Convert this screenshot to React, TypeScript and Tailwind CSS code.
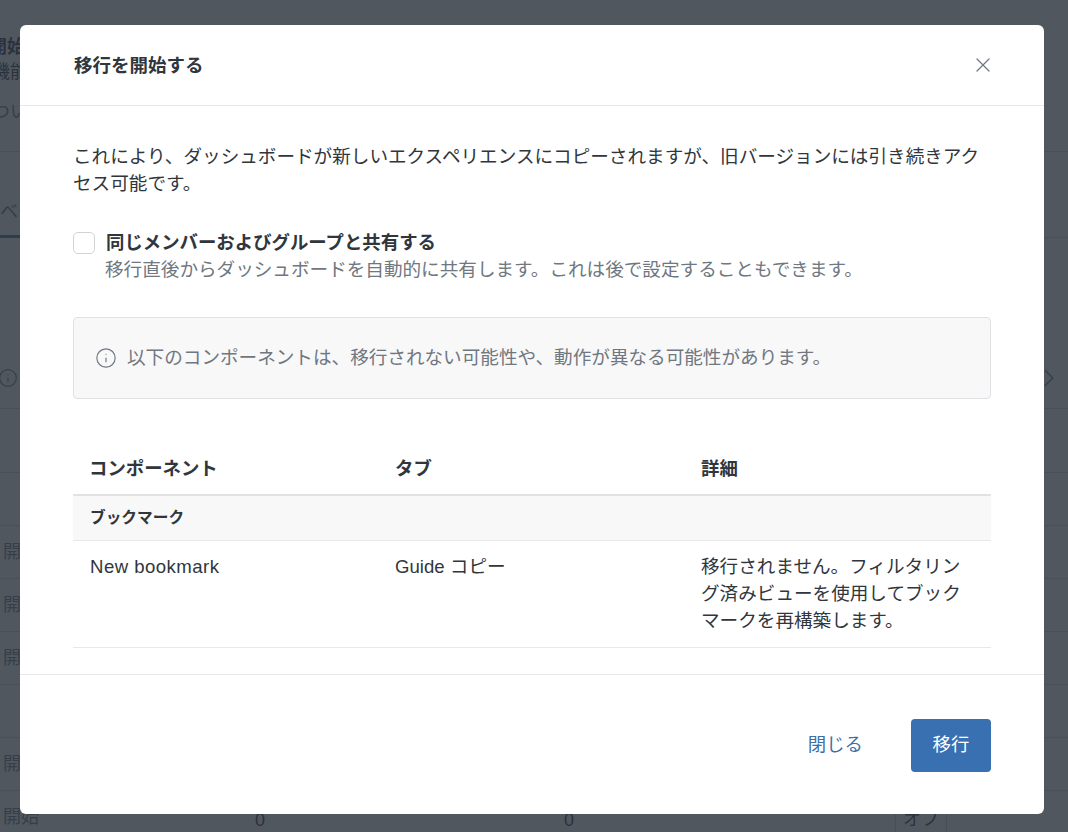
import { ChevronRight, Info, X } from "lucide-react";

const font = { fontFamily: '"Liberation Sans", "Noto Sans CJK JP", sans-serif' };

const bgRows = ["", "開始", "開始", "開始", "", "開始", "開始"];

const Backdrop = () => (
  <div className="h-[832px] overflow-hidden bg-white text-[#2e3338]">
    <div className="h-[152px] border-b border-[#d5d8dc] pt-[35px]">
      <p className="-ml-[11px] text-[18px] font-bold leading-[24px]">開始</p>
      <p className="-ml-[8px] mt-[1px] text-[18px] leading-[24px]">機能</p>
      <p className="-ml-[8px] mt-[16px] text-[18px] leading-[24px] text-[#6f7780]">ついて</p>
    </div>
    <div className="h-[86px] border-b border-[#d5d8dc] pt-[48px] text-[18px] leading-[24px] text-[#6f7780]">
      ベータ
    </div>
    <div className="-mt-[3px] h-[3px] w-[200px] bg-[#3a6eb0]" />
    <div className="flex h-[171px] items-center justify-between border-b border-[#d5d8dc] pt-[109px] pr-[4px] -ml-[2px]">
      <Info className="h-[20px] w-[20px] text-[#6f7780]" strokeWidth={1.5} />
      <ChevronRight className="h-[30px] w-[30px] text-[#6f7780]" strokeWidth={1.25} />
    </div>
    <div className="h-[64px] border-b border-[#d5d8dc]" />
    {bgRows.map((label, i) => (
      <div key={i} className="flex h-[53px] items-center border-b border-[#d5d8dc] pl-[3px] text-[18px] text-[#6f7780]">
        {label}
      </div>
    ))}
  </div>
);

const Footnotes = () => (
  <div className="absolute bottom-0 left-0 right-0 h-[30px] text-[18px] leading-[18px] text-[#2e3338]">
    <span className="absolute left-[255px] top-[9px]">0</span>
    <span className="absolute left-[564px] top-[9px]">0</span>
    <span className="absolute left-[895px] top-0 h-[40px] w-[52px] rounded border border-[#c9ccd1] pt-[7px] text-center">オフ</span>
  </div>
);

export default function App() {
  return (
    <div className="relative h-[832px] w-[1068px] overflow-hidden" style={font}>
      <Backdrop />
      <Footnotes />
      <div className="absolute inset-0 flex items-start bg-[#2b323c]/[0.82] pl-[20px] pt-[25px]">
        <div className="h-[789px] w-[1024px] rounded-[6px] bg-white text-[18px] text-[#30363c]">
          <div className="flex h-[81px] items-center justify-between border-b border-[#e6e8ea] pl-[54px] pr-[49px]">
            <h2 className="pt-[1px] text-[18.5px] font-bold">移行を開始する</h2>
            <X className="h-[24px] w-[24px] text-[#6f7780]" strokeWidth={1.25} />
          </div>

          <div className="px-[53px] pt-[37px]">
            <p className="text-[18.6px] leading-[27px]">
              これにより、ダッシュボードが新しいエクスペリエンスにコピーされますが、旧バージョンには引き続きアクセス可能です。
            </p>

            <div className="mt-[32px] flex gap-[11px]">
              <div className="mt-[3px] h-[22px] w-[22px] rounded-[5px] border border-[#cfd2d6] bg-white" />
              <div className="leading-[27px]">
                <p className="text-[18.4px] font-bold">同じメンバーおよびグループと共有する</p>
                <p className="-ml-[1px] text-[18.6px] text-[#6f7780]">移行直後からダッシュボードを自動的に共有します。これは後で設定することもできます。</p>
              </div>
            </div>

            <div className="mt-[34px] flex h-[82px] items-center gap-[11px] rounded-[4px] border border-[#dfe1e4] bg-[#f8f8f9] pl-[22px] text-[18.6px] text-[#6f7780]">
              <Info className="-ml-[1px] h-[22px] w-[22px]" strokeWidth={1.25} />
              <span className="-ml-[1px]">以下のコンポーネントは、移行されない可能性や、動作が異なる可能性があります。</span>
            </div>

            <div className="mt-[56px] text-[18.6px]">
              <div className="grid grid-cols-3 border-b-2 border-[#e0e2e5] pb-[12px] text-[18.4px] font-bold leading-[27px]">
                <div className="pl-[16px]">コンポーネント</div>
                <div className="pl-[16px]">タブ</div>
                <div className="pl-[16px]">詳細</div>
              </div>
              <div className="flex h-[45px] items-center border-b border-[#e6e8ea] bg-[#f8f8f9] pl-[17px] text-[15.7px] font-bold">
                ブックマーク
              </div>
              <div className="grid grid-cols-3 border-b border-[#e6e8ea] pb-[13px] pt-[12px] leading-[27px]">
                <div className="pl-[17px] tracking-[0.45px]">New bookmark</div>
                <div className="pl-[16px]">Guide コピー</div>
                <div className="pl-[16px] pr-[17px]">移行されません。フィルタリング済みビューを使用してブックマークを再構築します。</div>
              </div>
            </div>
          </div>

          <div className="mt-[26px] flex h-[140px] items-center justify-end gap-[48px] border-t border-[#e6e8ea] pr-[53px] pt-[1px]">
            <button className="text-[18.4px] text-[#3e6fa6]">閉じる</button>
            <button className="h-[53px] w-[80px] rounded-[4px] bg-[#3870b2] text-[18.4px] text-white">移行</button>
          </div>
        </div>
      </div>
    </div>
  );
}
